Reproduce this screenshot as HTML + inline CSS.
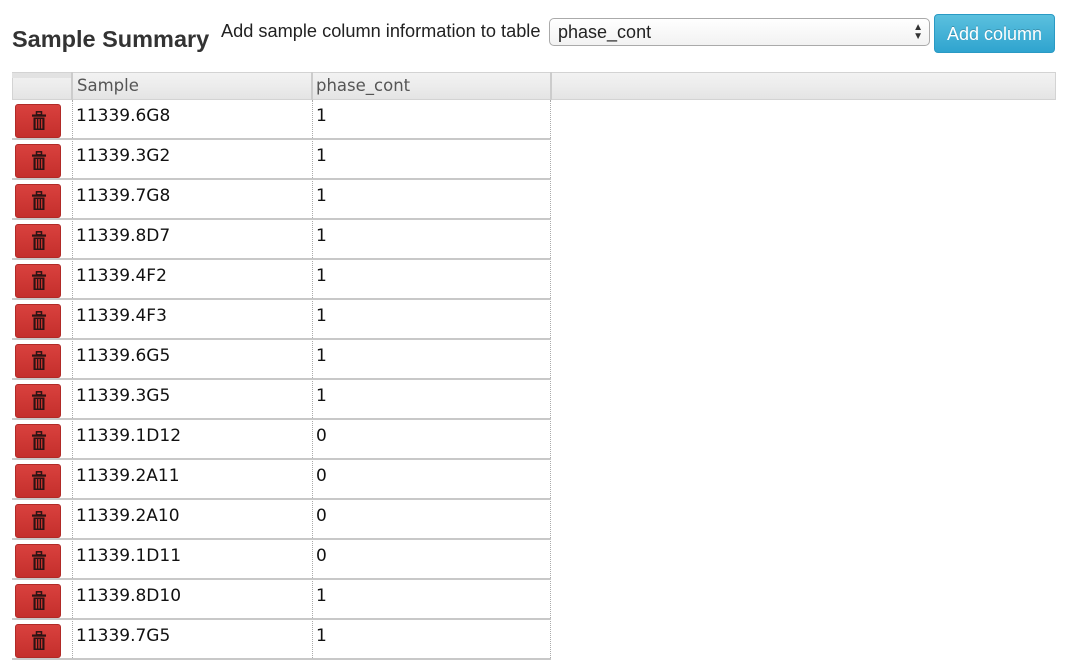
<!DOCTYPE html>
<html><head><meta charset="utf-8"><style>
body{margin:0;width:1072px;height:670px;background:#fff;position:relative;overflow:hidden;font-family:"Liberation Sans",Arial,sans-serif;color:#333}
.a{position:absolute}
.title{left:12px;top:26px;font-size:23.5px;font-weight:bold;color:#333}
.lbl{left:221px;top:21px;font-size:18.2px;color:#222}
.sel{left:549px;top:18px;width:381px;height:28px;border:1px solid #aaa;border-radius:5px;background:linear-gradient(#fff,#f2f2f2);box-sizing:border-box;font-size:18px;color:#222;padding:3px 0 0 8px}
.btn{left:934px;top:14px;width:121px;height:39px;border-radius:4px;background:linear-gradient(#5bc0de,#2fa4cf);border:1px solid #2a9ac4;box-sizing:border-box;color:#fff;font-size:18px;text-align:center;line-height:38px;text-shadow:0 -1px 0 rgba(0,0,0,.2)}
.hdr{left:12px;top:72px;width:1044px;height:28px;box-sizing:border-box;border:1px solid #d3d3d3;background:linear-gradient(#f2f2f2 0,#ececec 50%,#e4e4e4 100%)}
.hc{top:72px;height:28px;font-size:16.5px;color:#555;font-family:"DejaVu Sans",Verdana,sans-serif;line-height:28px}
.row{left:12px;width:539px;height:40px;border-bottom:2px solid #c8c8c8;box-sizing:border-box}
.cell{font-family:"DejaVu Sans",Verdana,sans-serif;font-size:17px;color:#111}
.vd{width:0;border-left:1px dotted #aaa}
.tb{width:46px;height:34px;left:15px;border-radius:3px;background:linear-gradient(#d9413e,#c42f2c);border:1px solid #b12a27;box-sizing:border-box}
</style></head><body>
<div class="a title">Sample Summary</div>
<div class="a lbl">Add sample column information to table</div>
<div class="a sel">phase_cont<span style="position:absolute;right:6px;top:4px;font-size:10px;line-height:9px;color:#333">▲<br>▼</span></div>
<div class="a btn">Add column</div>
<div class="a hdr"></div>
<div class="a" style="left:12px;top:73px;width:59px;height:5px;background:#e2e2e2"></div>
<div class="a" style="left:71px;top:72px;height:28px;border-left:2px solid #ccc"></div>
<div class="a" style="left:311px;top:72px;height:28px;border-left:2px solid #ccc"></div>
<div class="a" style="left:550px;top:72px;height:28px;border-left:2px solid #ccc"></div>
<div class="a hc" style="left:77px">Sample</div>
<div class="a hc" style="left:316px">phase_cont</div>
<div class="a vd" style="left:72px;top:100px;height:560px"></div>
<div class="a vd" style="left:312px;top:100px;height:560px"></div>
<div class="a vd" style="left:550px;top:100px;height:560px"></div>
<div id="rows"></div>
<script>
var d=[["11339.6G8",1],["11339.3G2",1],["11339.7G8",1],["11339.8D7",1],["11339.4F2",1],["11339.4F3",1],["11339.6G5",1],["11339.3G5",1],["11339.1D12",0],["11339.2A11",0],["11339.2A10",0],["11339.1D11",0],["11339.8D10",1],["11339.7G5",1]];
var h="";
var ic='<svg width="16" height="20" viewBox="0 0 16 20" style="position:absolute;left:15px;top:6px"><rect x="1" y="3.5" width="14" height="2.2" fill="#2a1414"/><rect x="5.5" y="0.8" width="5" height="3" fill="none" stroke="#2a1414" stroke-width="1.5"/><rect x="2.5" y="6.5" width="11" height="12.5" fill="#2a1414"/><rect x="4.6" y="8" width="1.4" height="9.5" fill="#c8322f"/><rect x="7.3" y="8" width="1.4" height="9.5" fill="#c8322f"/><rect x="10" y="8" width="1.4" height="9.5" fill="#c8322f"/></svg>';
d.forEach(function(r,i){var t=100+i*40;
h+='<div class="a row" style="top:'+t+'px"></div>';
h+='<div class="a tb" style="top:'+(t+4)+'px">'+ic+'</div>';
h+='<div class="a cell" style="left:76px;top:'+(t+6)+'px">'+r[0]+'</div>';
h+='<div class="a cell" style="left:316px;top:'+(t+6)+'px">'+r[1]+'</div>';});
document.getElementById("rows").innerHTML=h;
</script>
</body></html>
